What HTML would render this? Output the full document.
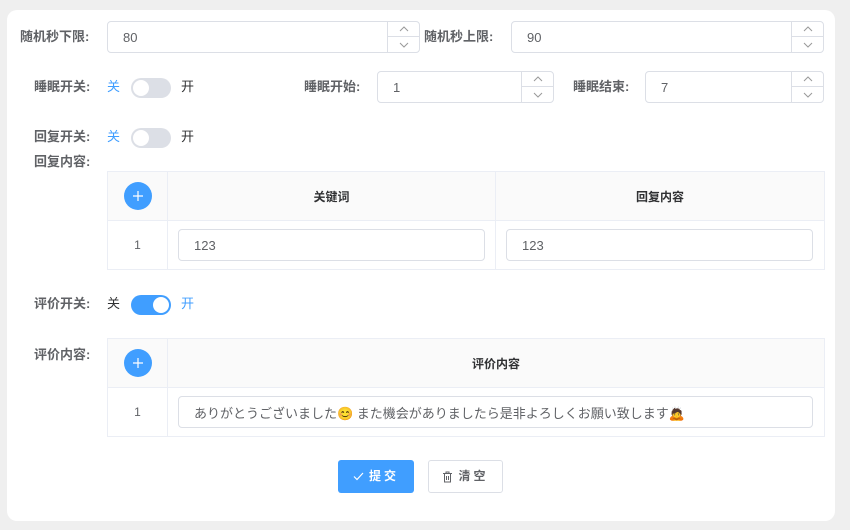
<!DOCTYPE html><html><head><meta charset="utf-8"><style>
*{box-sizing:border-box;margin:0;padding:0}
body{width:850px;height:530px;background:#efefef;font-family:"Liberation Sans","Noto Sans CJK SC",sans-serif;font-size:13px;color:#606266;position:relative;overflow:hidden}
.card{position:absolute;left:7px;top:10px;width:828px;height:511px;background:#fff;border-radius:10px}
.a{position:absolute;line-height:17px}
.lbl{position:absolute;font-weight:bold;color:#606266;white-space:nowrap;font-size:13px;line-height:17px}
.inp{position:absolute;border:1px solid #dcdfe6;border-radius:4px;background:#fff;padding-left:15px;display:flex;align-items:center;color:#606266;white-space:nowrap}
.step{position:absolute;right:0;top:0;bottom:0;width:32px;border-left:1px solid #dcdfe6}
.step div{height:50%;display:flex;align-items:center;justify-content:center}
.step div:first-child{border-bottom:1px solid #dcdfe6}
.sw{position:absolute;width:40px;height:20px;border-radius:10px;background:#dcdfe6}
.sw i{position:absolute;top:2px;left:2px;width:16px;height:16px;border-radius:50%;background:#fff}
.sw.on{background:#409eff}.sw.on i{left:22px}
.tbl{position:absolute;border:1px solid #ebeef5}
.cell{position:absolute;border-right:1px solid #ebeef5;border-bottom:1px solid #ebeef5;display:flex;align-items:center;justify-content:center}
.hd{background:#fafafa;font-weight:bold;color:#303133;font-size:12px}
.plus{width:28px;height:28px;border-radius:50%;background:#409eff;display:flex;align-items:center;justify-content:center}
</style></head><body>
<div class="card"></div>
<svg width="0" height="0" style="position:absolute"><defs>
<symbol id="up" viewBox="0 0 10 6"><path d="M1 5L5 1L9 5" fill="none" stroke="#999" stroke-width="1"/></symbol>
<symbol id="dn" viewBox="0 0 10 6"><path d="M1 1L5 5L9 1" fill="none" stroke="#999" stroke-width="1"/></symbol>
<symbol id="pl" viewBox="0 0 12 12"><path d="M6 1V11M1 6H11" stroke="#fff" stroke-width="1.2"/></symbol>
</defs></svg>
<div class="lbl" style="left:20px;top:28px">随机秒下限:</div>
<div class="inp" style="left:107px;top:21px;width:313px;height:32px">80<div class="step"><div><svg width="10" height="6"><use href="#up"/></svg></div><div><svg width="10" height="6"><use href="#dn"/></svg></div></div></div>
<div class="lbl" style="left:424px;top:28px">随机秒上限:</div>
<div class="inp" style="left:511px;top:21px;width:313px;height:32px">90<div class="step"><div><svg width="10" height="6"><use href="#up"/></svg></div><div><svg width="10" height="6"><use href="#dn"/></svg></div></div></div>

<div class="lbl" style="left:34px;top:78px">睡眠开关:</div>
<div class="a" style="left:107px;top:78px;color:#409eff">关</div>
<div class="sw" style="left:131px;top:78px"><i></i></div>
<div class="a" style="left:181px;top:78px;color:#303133">开</div>
<div class="lbl" style="left:304px;top:78px">睡眠开始:</div>
<div class="inp" style="left:377px;top:71px;width:177px;height:32px">1<div class="step"><div><svg width="10" height="6"><use href="#up"/></svg></div><div><svg width="10" height="6"><use href="#dn"/></svg></div></div></div>
<div class="lbl" style="left:573px;top:78px">睡眠结束:</div>
<div class="inp" style="left:645px;top:71px;width:179px;height:32px">7<div class="step"><div><svg width="10" height="6"><use href="#up"/></svg></div><div><svg width="10" height="6"><use href="#dn"/></svg></div></div></div>

<div class="lbl" style="left:34px;top:128px">回复开关:</div>
<div class="a" style="left:107px;top:128px;color:#409eff">关</div>
<div class="sw" style="left:131px;top:128px"><i></i></div>
<div class="a" style="left:181px;top:128px;color:#303133">开</div>

<div class="lbl" style="left:34px;top:153px">回复内容:</div>
<div class="tbl" style="left:107px;top:171px;width:718px;height:99px">
<div class="cell hd" style="left:0;top:0;width:60px;height:49px"><div class="plus"><svg width="12" height="12"><use href="#pl"/></svg></div></div>
<div class="cell hd" style="left:60px;top:0;width:328px;height:49px">关键词</div>
<div class="cell hd" style="left:388px;top:0;width:328px;height:49px;border-right:0">回复内容</div>
<div class="cell" style="left:0;top:49px;width:60px;height:48px;border-bottom:0;font-size:12px">1</div>
<div class="cell" style="left:60px;top:49px;width:328px;height:48px;border-bottom:0"></div>
<div class="inp" style="left:70px;top:57px;width:307px;height:32px">123</div>
<div class="inp" style="left:398px;top:57px;width:307px;height:32px">123</div>
</div>

<div class="lbl" style="left:34px;top:295px">评价开关:</div>
<div class="a" style="left:107px;top:295px;color:#303133">关</div>
<div class="sw on" style="left:131px;top:295px"><i></i></div>
<div class="a" style="left:181px;top:295px;color:#409eff">开</div>

<div class="lbl" style="left:34px;top:346px">评价内容:</div>
<div class="tbl" style="left:107px;top:338px;width:718px;height:99px">
<div class="cell hd" style="left:0;top:0;width:60px;height:49px"><div class="plus"><svg width="12" height="12"><use href="#pl"/></svg></div></div>
<div class="cell hd" style="left:60px;top:0;width:656px;height:49px;border-right:0">评价内容</div>
<div class="cell" style="left:0;top:49px;width:60px;height:48px;border-bottom:0;font-size:12px">1</div>
<div class="inp" style="left:70px;top:57px;width:635px;height:32px">ありがとうございました😊 また機会がありましたら是非よろしくお願い致します🙇</div>
</div>

<div class="a" style="left:338px;top:460px;width:76px;height:33px;background:#409eff;border-radius:3px;color:#fff;font-size:12px;font-weight:bold;display:flex;align-items:center;justify-content:center;letter-spacing:3px"><svg width="11" height="9" style="margin-right:5px"><path d="M1 4.5L4 7.5L10 1" fill="none" stroke="#fff" stroke-width="1.2"/></svg>提交</div>
<div class="a" style="left:428px;top:460px;width:75px;height:33px;border:1px solid #dcdfe6;border-radius:3px;color:#606266;font-size:12px;font-weight:bold;display:flex;align-items:center;justify-content:center;letter-spacing:3px"><svg width="11" height="12" style="margin-right:5px"><path d="M1 2.5H10M4 2.5V1H7V2.5M2.5 2.5V11H8.5V2.5M4.5 5V9M6.5 5V9" fill="none" stroke="#606266" stroke-width="1"/></svg>清空</div>
</body></html>
